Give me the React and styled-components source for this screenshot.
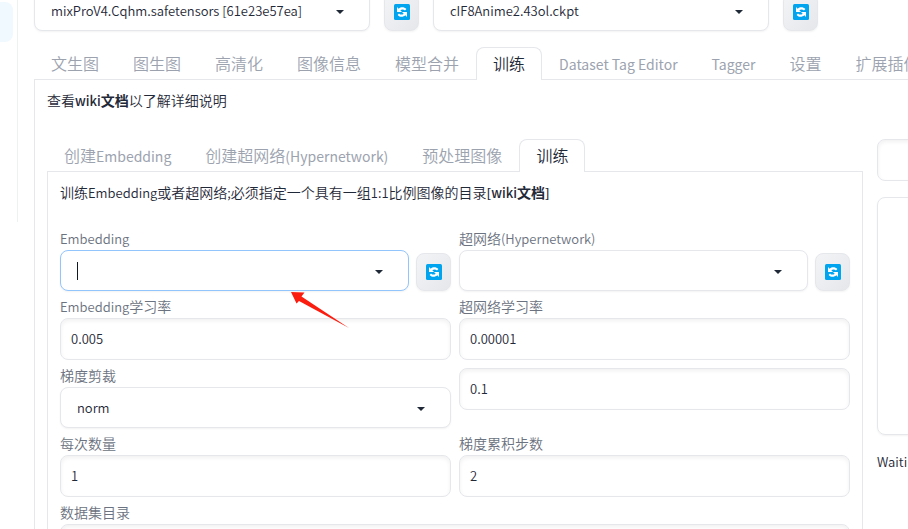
import { useState } from "react";
import styled, { createGlobalStyle, css } from "styled-components";

const GlobalStyle = createGlobalStyle`
    * {
        box-sizing: border-box;
    }

    body {
        margin: 0;
        background: #fff;
        color: #1f2937;
        font: 350 14px/20px "Noto Sans CJK SC", sans-serif;
    }

    button,
    input,
    select {
        margin: 0;
        font: inherit;
        color: inherit;
    }
`;

const Page = styled.div`
    display: flex;
    align-items: flex-start;
    height: 100vh;
    overflow: hidden;
`;

const Sidebar = styled.aside`
    flex: 0 0 18px;
    height: 222px;
    padding: 2px 4px 0 0;
    border-right: 1px solid #eef0f2;
`;

const SidebarItem = styled.div`
    height: 40px;
    background: #f0f9ff;
    border-radius: 0 8px 8px 0;
`;

const Main = styled.main`
    flex: none;
    margin-left: 16px;
`;

/* the page is scrolled, so only the lower part of this row stays visible */
const QuickSettings = styled.div`
    display: grid;
    grid-template-columns: repeat(2, calc(50vw - 118px) 35px);
    gap: 14px;
    align-items: end;
    align-content: end;
    height: 31px;
`;

/* latin letters look too big next to hanzi at the same size */
const Latin = styled.span`
    font-size: ${p => p.$size || 13}px;
    line-height: 0;
`;

const TabList = styled.div`
    display: flex;
    margin-top: ${p => p.$top}px;
`;

const Tab = styled.button`
    display: flex;
    flex: none;
    align-items: flex-start;
    height: 32px;
    padding: 0 16px;
    border: 1px solid transparent;
    border-bottom: 0;
    border-radius: 8px 8px 0 0;
    background: none;
    color: #9ca3af;
    font-size: 16px;
    line-height: 31px;
    white-space: pre;
    cursor: pointer;

    ${Latin} {
        font-weight: 400;
    }

    ${p => p.$active && css`
        position: relative;
        margin-bottom: -1px;
        height: 33px;
        border-color: #e5e7eb;
        background: #fff;
        color: #1f2937;
    `}
`;

const Panel = styled.section`
    padding: 10px 12px;
    border: 1px solid #e5e7eb;
`;

const Note = styled.p`
    margin: 0;

    a {
        color: inherit;
        text-decoration: none;
    }

    a ${Latin} {
        font-weight: 500;
    }

    b {
        font-weight: 700;
    }
`;

const Columns = styled.div`
    display: grid;
    grid-template-columns: repeat(2, calc(100vw - 92px));
    gap: 14px;
    margin-top: 29px;
`;

const Output = styled.div`
    display: flex;
    flex-direction: column;
    gap: 16px;
`;

const Gallery = styled.div`
    height: 238px;
    border: 1px solid #e5e7eb;
    border-radius: 8px;
    box-shadow: 0 1px 2px rgba(0, 0, 0, .05);
`;

const Form = styled.form`
    display: flex;
    flex-direction: column;
    gap: 8px;
    margin-top: 29px;
`;

const Row = styled.div`
    display: grid;
    grid-template-columns: repeat(${p => p.$cols || 2}, minmax(0, 1fr));
    gap: 8px;
    align-items: start;
`;

const WithButton = styled.div`
    display: flex;
    align-items: flex-end;
    gap: 7px;

    & > :first-child {
        flex: 1;
    }
`;

const Label = styled.label`
    display: block;
    height: 19px;
    color: #6b7280;
    line-height: 15px;
`;

const TextInput = styled.input`
    display: block;
    width: 100%;
    height: 42px;
    padding: 0 10px 2px;
    border: 1px solid #e5e7eb;
    border-radius: 8px;
    background: #fff;
    box-shadow: inset 0 2px 4px rgba(0, 0, 0, .06);
    font-size: 13px;
    outline: none;
`;

const SelectBox = styled.div`
    position: relative;
    display: flex;
    align-items: center;
    width: 100%;
    height: 41px;
    padding-left: 16px;
    border: 1px solid ${p => p.$focused ? "#93c5fd" : "#e5e7eb"};
    border-radius: 8px;
    background: #fff;
    box-shadow: 0 1px 2px rgba(0, 0, 0, .05);

    select,
    input {
        flex: 1;
        min-width: 0;
        height: 100%;
        padding: 0;
        border: 0;
        background: none;
        font-size: 13px;
        appearance: none;
        outline: none;
    }
`;

const Chevron = styled.svg`
    flex: none;
    width: 8px;
    height: 4px;
    margin: 2px 25px 0 8px;
`;

const TextCursor = styled.span`
    width: 1px;
    height: 18px;
    background: #111827;
`;

const RefreshButton = styled.button`
    display: flex;
    align-items: center;
    justify-content: center;
    width: 35px;
    height: 38px;
    padding: 0;
    border: 1px solid #e5e7eb;
    border-radius: 8px;
    background: linear-gradient(to bottom right, #f3f4f6, #e5e7eb);
    box-shadow: 0 1px 2px rgba(0, 0, 0, .05);
    cursor: pointer;
`;

const Pointer = styled.svg`
    position: absolute;
    top: 40px;
    left: 229px;
    width: 62px;
    height: 40px;
    pointer-events: none;
`;

function Mixed({ children, size }) {
    return children.split(/([\x20-\x7e]+)/).map((part, i) => (
        i % 2 ? <Latin key={i} $size={size}>{part}</Latin> : part
    ));
}

function Refresh() {
    return (
        <RefreshButton type="button" aria-label="刷新">
            <svg width="16" height="16" viewBox="0 0 16 16" aria-hidden="true">
                <rect width="16" height="16" rx="1.5" fill="#00a4ef" />
                <path d="M3 3v5h5L6.3 6.3C7.6 5.1 9.7 5.1 11 6.6l1.4-1.5C10.3 2.7 6.9 2.6 4.7 4.7z" fill="#fff" />
                <path d="M13 13V8H8l1.7 1.7c-1.3 1.2-3.4 1.2-4.7-.3l-1.4 1.5c2.1 2.4 5.5 2.5 7.7.4z" fill="#fff" />
            </svg>
        </RefreshButton>
    );
}

function Arrow() {
    return (
        <Chevron viewBox="0 0 8 4" aria-hidden="true">
            <path d="M0 0h8L4 4z" fill="#1f2937" />
        </Chevron>
    );
}

function Dropdown({ id, value, label }) {
    return (
        <SelectBox>
            <select id={id} aria-label={label} defaultValue={value}>
                <option value={value}>{value}</option>
            </select>
            <Arrow />
        </SelectBox>
    );
}

function Field({ id, label, value }) {
    return (
        <div>
            <Label htmlFor={id}><Mixed>{label}</Mixed></Label>
            <TextInput id={id} defaultValue={value} />
        </div>
    );
}

function Tabs({ items, initial, top }) {
    const [active, setActive] = useState(initial);

    return (
        <TabList role="tablist" $top={top}>
            {items.map(name => (
                <Tab
                    key={name} type="button" role="tab" aria-selected={name === active}
                    $active={name === active} onClick={() => setActive(name)}
                >
                    <span><Mixed size={14}>{name}</Mixed></span>
                </Tab>
            ))}
        </TabList>
    );
}

const mainTabs = ["文生图", "图生图", "高清化", "图像信息", "模型合并", "训练", "Dataset Tag Editor", "Tagger", "设置", "扩展插件"];
const trainTabs = ["创建Embedding", "创建超网络(Hypernetwork)", "预处理图像", "训练"];

export default function App() {
    return (
        <Page>
            <GlobalStyle />
            <Sidebar>
                <SidebarItem />
            </Sidebar>

            <Main>
                <QuickSettings>
                    <Dropdown label="模型" value="mixProV4.Cqhm.safetensors [61e23e57ea]" />
                    <Refresh />
                    <Dropdown label="VAE" value="cIF8Anime2.43ol.ckpt" />
                    <Refresh />
                </QuickSettings>

                <Tabs items={mainTabs} initial="训练" top={16} />
                <Panel>
                    <Note>查看<a href="#wiki"><Latin>wiki</Latin><b>文档</b></a>以了解详细说明</Note>

                    <Columns>
                        <div>
                            <Tabs items={trainTabs} initial="训练" top={0} />
                            <Panel>
                                <Note>
                                    <Mixed>训练Embedding或者超网络;必须指定一个具有一组1:1比例图像的目录</Mixed>
                                    <a href="#wiki"><Latin>[wiki</Latin><b>文档</b><Latin>]</Latin></a>
                                </Note>

                                <Form>
                                    <Row>
                                        <WithButton>
                                            <div>
                                                <Label htmlFor="embedding"><Mixed>Embedding</Mixed></Label>
                                                <SelectBox $focused>
                                                    <TextCursor />
                                                    <input id="embedding" role="combobox" aria-expanded="false" />
                                                    <Arrow />
                                                    <Pointer viewBox="0 0 62 40" aria-hidden="true">
                                                        <path d="M1 1L14.5 1.5L11.5 5.500L59 37L9 10L6.500 12.500z" fill="#fb1d10" />
                                                    </Pointer>
                                                </SelectBox>
                                            </div>
                                            <Refresh />
                                        </WithButton>
                                        <WithButton>
                                            <div>
                                                <Label htmlFor="hypernetwork"><Mixed>超网络(Hypernetwork)</Mixed></Label>
                                                <Dropdown id="hypernetwork" value="" />
                                            </div>
                                            <Refresh />
                                        </WithButton>
                                    </Row>
                                    <Row>
                                        <Field id="embedding-rate" label="Embedding学习率" value="0.005" />
                                        <Field id="hypernetwork-rate" label="超网络学习率" value="0.00001" />
                                    </Row>
                                    <Row>
                                        <div>
                                            <Label htmlFor="clip">梯度剪裁</Label>
                                            <Dropdown id="clip" value="norm" />
                                        </div>
                                        <TextInput aria-label="梯度剪裁值" defaultValue="0.1" />
                                    </Row>
                                    <Row>
                                        <Field id="batch" label="每次数量" value="1" />
                                        <Field id="steps" label="梯度累积步数" value="2" />
                                    </Row>
                                    <Row $cols={1}>
                                        <Field id="dataset" label="数据集目录" value="" />
                                    </Row>
                                </Form>
                            </Panel>
                        </div>

                        <Output>
                            <TextInput aria-label="输出" />
                            <Gallery />
                            <Note><Mixed>Waiting...</Mixed></Note>
                        </Output>
                    </Columns>
                </Panel>
            </Main>
        </Page>
    );
}
